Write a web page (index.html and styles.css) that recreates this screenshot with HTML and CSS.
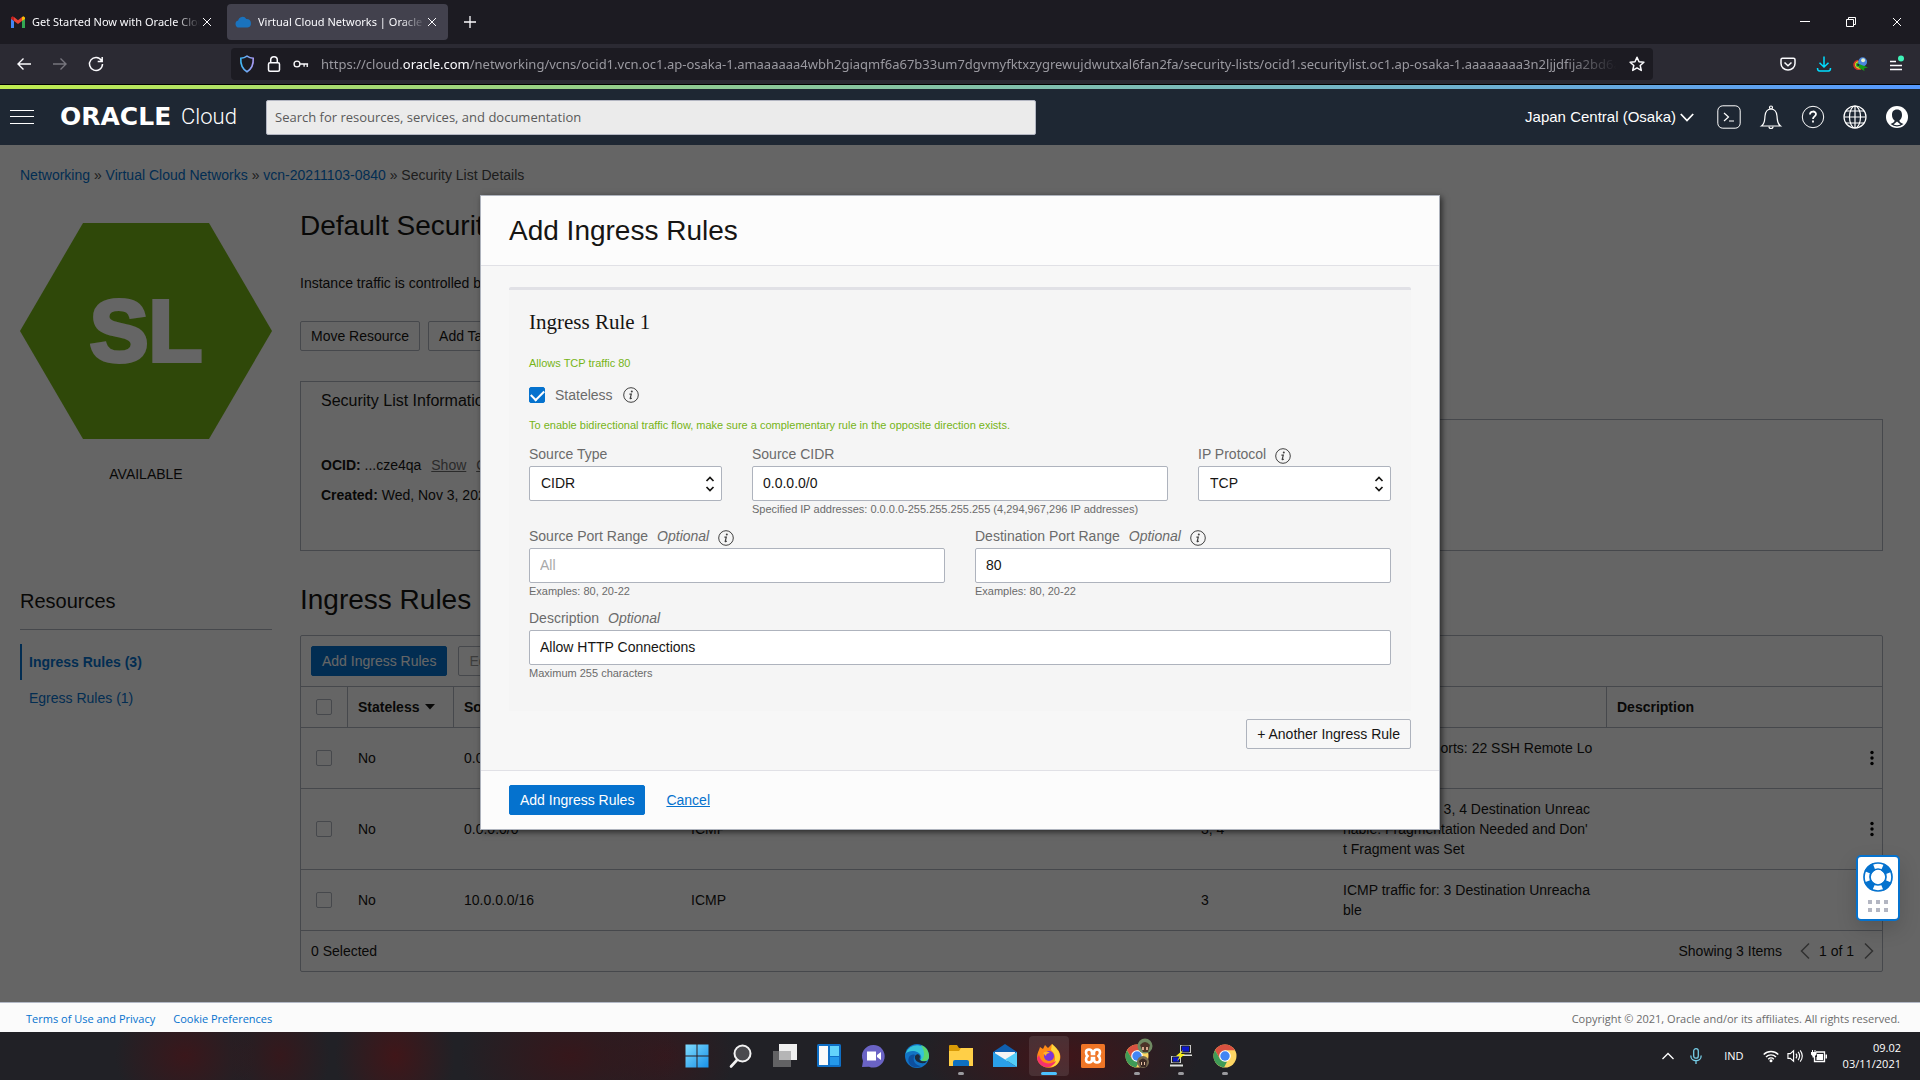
FILE: index.html
```html
<!DOCTYPE html>
<html lang="en">
<head>
<meta charset="utf-8">
<title>Virtual Cloud Networks | Oracle Cloud Infrastructure</title>
<link rel="stylesheet" href="styles.css">
</head>
<body>
<svg class="sprite" aria-hidden="true">
  <symbol id="info" viewBox="0 0 16 16"><circle cx="8" cy="8" r="7.3" fill="none" stroke="#404040"/><circle cx="8.8" cy="4.6" r="1" fill="#404040"/><path d="M6.4 7.2h1.9L7.2 11.3q-.2.8 1.6-.3" fill="none" stroke="#404040" stroke-width="1.2"/></symbol>
  <symbol id="close" viewBox="0 0 10 10"><path d="M1 1l8 8M9 1l-8 8" stroke="currentColor" fill="none"/></symbol>
  <symbol id="kebab" viewBox="0 0 4 16"><circle cx="2" cy="2.500" r="1.700"/><circle cx="2" cy="8" r="1.700"/><circle cx="2" cy="13.500" r="1.700"/></symbol>
  <symbol id="updown" viewBox="0 0 10 16"><path d="M1.500 5L5 1.500 8.500 5M1.500 11L5 14.500 8.500 11" fill="none" stroke="#161513" stroke-width="1.700"/></symbol>
  <symbol id="chrome" viewBox="0 0 24 24"><circle cx="12" cy="12" r="11.500" fill="#fdd663"/><path d="M12 .5a11.500 11.500 0 0 1 10 5.800H12L7 15 2 6.300A11.500 11.500 0 0 1 12 .5z" fill="#d95140"/><path d="M2 6.300L7 15l5 2.600 2 .2-3 5.700A11.500 11.500 0 0 1 2 6.300z" fill="#3f9b57"/><circle cx="12" cy="12" r="5.800" fill="#fff"/><circle cx="12" cy="12" r="4.700" fill="#4285f4"/></symbol>
</svg>

<header class="browser">
  <div class="tabbar">
    <div class="tab">
      <svg width="14" height="12" viewBox="0 0 14 12"><path d="M0 2v10h3V5z" fill="#4285f4"/><path d="M14 2v10h-3V5z" fill="#34a853"/><path d="M0 1.500L1.500.3 3 1v4L0 3z" fill="#c5221f"/><path d="M3 1l4 3.200L11 1v4L7 8 3 5z" fill="#ea4335"/><path d="M11 1l1.500-.7L14 1.500V3l-3 2z" fill="#fbbc04"/></svg>
      <span class="tab-title">Get Started Now with Oracle Cloud</span>
      <button class="tab-close" aria-label="Close tab"><svg width="10" height="10"><use href="#close"/></svg></button>
    </div>
    <div class="tab tab-active">
      <svg width="16" height="12" viewBox="0 0 16 12"><path d="M4 11.500a3.500 3.500 0 0 1-.8-6.900A4.400 4.400 0 0 1 11.300 3a4.300 4.300 0 0 1 1.200 8.500z" fill="#1a73be"/></svg>
      <span class="tab-title">Virtual Cloud Networks | Oracle Cloud</span>
      <button class="tab-close" aria-label="Close tab"><svg width="10" height="10"><use href="#close"/></svg></button>
    </div>
    <button class="tab-new" aria-label="New tab"><svg width="12" height="12" viewBox="0 0 12 12"><path d="M6 0v12M0 6h12" stroke="#fbfbfe" stroke-width="1.300"/></svg></button>
    <div class="window-controls">
      <button aria-label="Minimize"><svg width="10" height="10" viewBox="0 0 10 10"><path d="M0 4.500h10" stroke="#fff"/></svg></button>
      <button aria-label="Restore"><svg width="10" height="10" viewBox="0 0 10 10" fill="none" stroke="#fff"><path d="M.5 2.500h7v7h-7zM2.500 2.500v-2h7v7h-2"/></svg></button>
      <button aria-label="Close window"><svg width="10" height="10" color="#fff"><use href="#close"/></svg></button>
    </div>
  </div>
  <div class="navbar">
    <div class="nav-buttons">
      <button aria-label="Back"><svg width="16" height="16" viewBox="0 0 16 16" fill="none" stroke="#fbfbfe" stroke-width="1.400"><path d="M15 8H2M7.500 2.500L2 8l5.500 5.500"/></svg></button>
      <button aria-label="Forward"><svg width="16" height="16" viewBox="0 0 16 16" fill="none" stroke="#77767e" stroke-width="1.400"><path d="M1 8h13M8.500 2.500L14 8l-5.500 5.500"/></svg></button>
      <button aria-label="Reload"><svg width="16" height="16" viewBox="0 0 16 16" fill="none" stroke="#fbfbfe" stroke-width="1.500"><path d="M13.500 4.500A6.500 6.500 0 1 0 14.500 8M14.200 1v4.500H9.700"/></svg></button>
    </div>
    <div class="urlbar">
      <svg width="16" height="18" viewBox="0 0 16 18"><defs><linearGradient id="sg" x1="0" x2="1"><stop offset="0" stop-color="#3fb8f5"/><stop offset="1" stop-color="#a99cf5"/></linearGradient></defs><path d="M8 1.200c2 1.500 4.300 2 6.200 2 .4 6-1.200 10.500-6.200 13.500C3 13.700 1.400 9.200 1.800 3.200c1.900 0 4.200-.5 6.200-2z" fill="none" stroke="url(#sg)" stroke-width="1.600"/></svg>
      <svg width="14" height="18" viewBox="0 0 14 18" fill="none" stroke="#fbfbfe" stroke-width="1.500"><rect x="1.500" y="7.800" width="11" height="8.500" rx="1.500"/><path d="M3.700 7.800V5a3.300 3.300 0 0 1 6.600 0v2.800"/></svg>
      <svg width="16" height="10" viewBox="0 0 18 10" fill="none" stroke="#fbfbfe" stroke-width="1.500"><circle cx="4.500" cy="5" r="3.300"/><path d="M8 5h9M16 5v3.500M12.500 5v3"/></svg>
      <span class="url">https://cloud.<b>oracle.com</b>/networking/vcns/ocid1.vcn.oc1.ap-osaka-1.amaaaaaa4wbh2giaqmf6a67b33um7dgvmyfktxzygrewujdwutxal6fan2fa/security-lists/ocid1.securitylist.oc1.ap-osaka-1.aaaaaaaa3n2ljjdfija2bd6ayz</span>
      <button aria-label="Bookmark"><svg width="16" height="16" viewBox="0 0 16 16"><path d="M8 1.200l2 4.500 4.900.5-3.700 3.300 1.100 4.900L8 11.900l-4.300 2.500 1.100-4.900L1.100 6.200 6 5.700z" fill="none" stroke="#fbfbfe" stroke-width="1.500" stroke-linejoin="round"/></svg></button>
    </div>
    <div class="nav-tools">
      <button aria-label="Pocket"><svg width="16" height="16" viewBox="0 0 16 16" fill="none" stroke="#fbfbfe" stroke-width="1.500"><path d="M2.500 2.200h11q1.500 0 1.500 1.500v3.800a7 6.500 0 0 1-14 0V3.700q0-1.500 1.500-1.500z"/><path d="M4.500 6.500L8 9.700l3.500-3.200"/></svg></button>
      <button aria-label="Downloads"><svg width="16" height="16" viewBox="0 0 16 16" fill="none" stroke="#00ddff" stroke-width="1.500"><path d="M8 .5v10.500M3.500 6.700L8 11l4.500-4.300M1.500 12q0 3 2 3h9q2 0 2-3"/></svg></button>
      <button aria-label="Download manager"><svg width="16" height="16" viewBox="0 0 18 16"><path d="M10 13.500A5.500 5 0 1 1 7 4" fill="none" stroke="#d6342b" stroke-width="1.800"/><path d="M10 12A4 3.500 0 1 1 7.500 5.500" fill="none" stroke="#f1d21a" stroke-width="1.600"/><path d="M9 10.500A2.500 2 0 1 1 8 7" fill="none" stroke="#2fae3a" stroke-width="1.500"/><circle cx="12" cy="5.500" r="5" fill="#4a86dd"/><circle cx="12.500" cy="3.800" r="2.200" fill="#e8f2d0"/><path d="M8 8l10 4-4.500 1 .5 3-6-3.500z" fill="#159a18"/></svg></button>
      <button aria-label="Menu"><svg width="16" height="18" viewBox="1 0 16 18"><path d="M3 6.500h6M3 10.500h12M3 14.500h12" stroke="#fbfbfe" stroke-width="1.500"/><circle cx="14" cy="3.500" r="3" fill="#3ff2b8"/></svg></button>
    </div>
  </div>
</header>

<header class="cloudbar">
  <button class="burger" aria-label="Navigation menu"><svg width="24" height="14" viewBox="0 0 24 14"><path d="M0 .5h24M0 6.500h24M0 13.500h24" stroke="#fff"/></svg></button>
  <a class="logo" href="#"><span class="logo-oracle">ORACLE</span><span class="logo-cloud">Cloud</span></a>
  <input class="search" type="text" aria-label="Search" placeholder="Search for resources, services, and documentation">
  <div class="cloud-tools">
    <button class="region">Japan Central (Osaka)<svg width="14" height="9" viewBox="0 0 14 9"><path d="M.8 1L7 7.500 13.200 1" fill="none" stroke="#fff" stroke-width="1.800"/></svg></button>
    <button aria-label="Cloud Shell"><svg width="24" height="24" viewBox="0 0 24 24" fill="none" stroke="#fff"><rect x=".8" y=".8" width="22.400" height="22.400" rx="5"/><path d="M7 8l4.500 4L7 16M12 16h5" stroke-width="1.200"/></svg></button>
    <button aria-label="Announcements"><svg width="24" height="24" viewBox="0 0 24 24" fill="none" stroke="#fff" stroke-width="1.200"><path d="M2.500 21c3.500-2.500 3-5 3.500-10 .4-4 2-7 6-7s5.600 3 6 7c.5 5 0 7.500 3.500 10z"/><circle cx="12" cy="2.500" r="1.500"/><path d="M10 21.500a2 2 0 0 0 4 0"/></svg></button>
    <button aria-label="Help"><svg width="24" height="24" viewBox="0 0 24 24" fill="none" stroke="#fff"><circle cx="12" cy="12" r="10.700"/><path d="M9 9.500c0-4 6-3.800 6-.4 0 2.400-3 2.200-3 5" stroke-width="1.800"/><path d="M12 15.500v2" stroke-width="1.800"/></svg></button>
    <button aria-label="Language"><svg width="24" height="24" viewBox="0 0 24 24" fill="none" stroke="#fff" stroke-width="1.200"><circle cx="12" cy="12" r="11"/><ellipse cx="12" cy="12" rx="5.500" ry="11"/><path d="M12 1v22M1 12h22M3 6h18M3 18h18"/></svg></button>
    <button aria-label="Profile"><svg width="24" height="24" viewBox="0 0 24 24"><circle cx="12" cy="12" r="11" fill="#fff"/><path d="M12 4.500c-3.500 0-5 2.300-5 5.500 0 2.500 1 4.500 2.600 5.600-.2 1.800-1.600 2.500-4.100 3.400a10 10 0 0 0 13 0c-2.500-.9-3.900-1.600-4.100-3.400C16 14.500 17 12.500 17 10c0-3.200-1.500-5.500-5-5.500z" fill="#1e2733"/><path d="M8.500 19.500l3.500-3 3.500 3a9 9 0 0 1-7 0z" fill="#fff"/></svg></button>
  </div>
</header>

<div class="stage">
<main class="page">
  <nav class="crumbs"><a href="#">Networking</a> » <a href="#">Virtual Cloud Networks</a> » <a href="#">vcn-20211103-0840</a> » Security List Details</nav>

  <div class="columns details">
    <aside class="badge-col">
      <div class="hexagon">SL</div>
      <p class="state">AVAILABLE</p>
    </aside>
    <section>
      <h1>Default Security List for vcn-20211103-0840</h1>
      <p class="lead">Instance traffic is controlled by firewall rules on each Instance in addition to this Security List</p>
      <div class="actions"><button class="btn">Move Resource</button><button class="btn">Add Tags</button></div>
      <div class="tabs"><button class="info-tab">Security List Information</button></div>
      <div class="panel">
        <p><b>OCID:</b> ...cze4qa <a href="#">Show</a> <a href="#">Copy</a></p>
        <p><b>Created:</b> Wed, Nov 3, 2021, 01:40:38 UTC</p>
      </div>
    </section>
  </div>

  <div class="columns rules">
    <aside class="resources">
      <h2>Resources</h2>
      <a class="current" href="#">Ingress Rules (3)</a>
      <a href="#">Egress Rules (1)</a>
    </aside>
    <section>
      <h1>Ingress Rules</h1>
      <div class="grid-box">
        <div class="toolbar"><button class="btn primary">Add Ingress Rules</button><button class="btn" disabled>Edit</button><button class="btn" disabled>Remove</button></div>
        <table>
          <colgroup><col class="c-check"><col class="c-state"><col class="c-source"><col class="c-port"><col class="c-port"><col class="c-port"><col class="c-type"><col class="c-allows"><col><col class="c-menu"></colgroup>
          <thead><tr>
            <th><input type="checkbox" aria-label="Select all"></th>
            <th>Stateless <svg width="10" height="6" viewBox="0 0 10 6"><path d="M0 0h10L5 5.500z" fill="#161513"/></svg></th>
            <th>Source</th><th>IP Protocol</th><th>Source Port Range</th><th>Destination Port</th><th>Type and Code</th><th>Allows</th><th>Description</th><th></th>
          </tr></thead>
          <tbody>
            <tr><td><input type="checkbox" aria-label="Select rule 1"></td><td>No</td><td>0.0.0.0/0</td><td>TCP</td><td>All</td><td>22</td><td></td><td>TCP traffic for ports: 22 SSH Remote Login Protocol</td><td></td><td><button class="menu" aria-label="Actions"><svg width="4" height="16"><use href="#kebab"/></svg></button></td></tr>
            <tr><td><input type="checkbox" aria-label="Select rule 2"></td><td>No</td><td>0.0.0.0/0</td><td>ICMP</td><td></td><td></td><td>3, 4</td><td>ICMP traffic for: 3, 4 Destination Unreachable: Fragmentation Needed and Don'<br>t Fragment was Set</td><td></td><td><button class="menu" aria-label="Actions"><svg width="4" height="16"><use href="#kebab"/></svg></button></td></tr>
            <tr><td><input type="checkbox" aria-label="Select rule 3"></td><td>No</td><td>10.0.0.0/16</td><td>ICMP</td><td></td><td></td><td>3</td><td>ICMP traffic for: 3 Destination Unreachable</td><td></td><td><button class="menu" aria-label="Actions"><svg width="4" height="16"><use href="#kebab"/></svg></button></td></tr>
          </tbody>
        </table>
        <div class="grid-foot">
          <span>0 Selected</span>
          <div class="pager"><span>Showing 3 Items</span>
            <button aria-label="Previous page"><svg width="10" height="16" viewBox="0 0 10 16"><path d="M9 .5L1.500 8 9 15.500" fill="none" stroke="#7a7a7a" stroke-width="1.500"/></svg></button>
            <span>1 of 1</span>
            <button aria-label="Next page"><svg width="10" height="16" viewBox="0 0 10 16"><path d="M1 .5L8.500 8 1 15.500" fill="none" stroke="#7a7a7a" stroke-width="1.500"/></svg></button>
          </div>
        </div>
      </div>
    </section>
  </div>
</main>

<div class="overlay">
  <form class="dialog" role="dialog" aria-labelledby="dlg-title">
    <header class="dialog-head"><h1 id="dlg-title">Add Ingress Rules</h1></header>
    <div class="dialog-body">
      <fieldset class="rule">
        <h2>Ingress Rule 1</h2>
        <p class="note">Allows TCP traffic 80</p>
        <div class="check-row"><input type="checkbox" id="stateless" checked><label for="stateless">Stateless</label><svg class="info" width="16" height="16"><use href="#info"/></svg></div>
        <p class="note">To enable bidirectional traffic flow, make sure a complementary rule in the opposite direction exists.</p>
        <div class="fields">
          <div class="field">
            <div class="label-row"><label for="stype">Source Type</label></div>
            <div class="select"><select id="stype"><option>CIDR</option></select><svg width="10" height="16"><use href="#updown"/></svg></div>
          </div>
          <div class="field wide">
            <div class="label-row"><label for="cidr">Source CIDR</label></div>
            <input type="text" id="cidr" value="0.0.0.0/0">
            <small>Specified IP addresses: 0.0.0.0-255.255.255.255 (4,294,967,296 IP addresses)</small>
          </div>
          <div class="field">
            <div class="label-row"><label for="proto">IP Protocol</label><svg class="info" width="16" height="16"><use href="#info"/></svg></div>
            <div class="select"><select id="proto"><option>TCP</option></select><svg width="10" height="16"><use href="#updown"/></svg></div>
          </div>
          <div class="field wide">
            <div class="label-row"><label for="sport">Source Port Range</label><i>Optional</i><svg class="info" width="16" height="16"><use href="#info"/></svg></div>
            <input type="text" id="sport" placeholder="All">
            <small>Examples: 80, 20-22</small>
          </div>
          <div class="field wide">
            <div class="label-row"><label for="dport">Destination Port Range</label><i>Optional</i><svg class="info" width="16" height="16"><use href="#info"/></svg></div>
            <input type="text" id="dport" value="80">
            <small>Examples: 80, 20-22</small>
          </div>
          <div class="field full">
            <div class="label-row"><label for="descr">Description</label><i>Optional</i></div>
            <input type="text" id="descr" value="Allow HTTP Connections">
            <small>Maximum 255 characters</small>
          </div>
        </div>
      </fieldset>
      <div class="another"><button type="button" class="btn">+ Another Ingress Rule</button></div>
    </div>
    <footer class="dialog-foot"><button type="button" class="btn primary">Add Ingress Rules</button><a href="#">Cancel</a></footer>
  </form>
</div>

<button class="support" aria-label="Support">
  <svg width="30" height="30" viewBox="0 0 30 30" fill="none" stroke="#0572ce"><circle cx="15" cy="15" r="11" stroke-width="7.500" stroke-dasharray="8.600 8.680" stroke-dashoffset="-4.300"/><circle cx="15" cy="15" r="14" stroke-width="1.700"/><circle cx="15" cy="15" r="8" stroke-width="1.700"/></svg>
  <svg width="20" height="12" viewBox="0 0 20 12" fill="#b3b6c2"><path d="M0 0h4v4H0zM8 0h4v4H8zM16 0h4v4h-4zM0 8h4v4H0zM8 8h4v4H8zM16 8h4v4h-4z"/></svg>
</button>
</div>

<footer class="site-foot">
  <nav><a href="#">Terms of Use and Privacy</a><a href="#">Cookie Preferences</a></nav>
  <span>Copyright © 2021, Oracle and/or its affiliates. All rights reserved.</span>
</footer>

<footer class="taskbar">
  <div class="apps">
    <button aria-label="Start"><svg width="24" height="24" viewBox="0 0 24 24"><defs><linearGradient id="win" x1="0" y1="0" x2="1" y2="1"><stop offset="0" stop-color="#7fdcff"/><stop offset="1" stop-color="#1890e8"/></linearGradient></defs><path d="M.5.500h11v11H.5zM12.500.500h11v11h-11zM.5 12.500h11v11H.5zM12.500 12.500h11v11h-11z" fill="url(#win)"/></svg></button>
    <button aria-label="Search"><svg width="24" height="24" viewBox="0 0 24 24" fill="#4a4a4e" stroke="#f2f2f2"><circle cx="13.500" cy="9.500" r="8" stroke-width="2"/><path d="M8 16l-6 6.500" stroke-width="2.600" stroke-linecap="round"/></svg></button>
    <button aria-label="Task view"><svg width="24" height="24" viewBox="0 0 24 24"><path d="M0 7h18v16H0z" fill="#626264"/><path d="M6 0h18v16H6z" fill="#efefef"/><path d="M6 7h12v9H6z" fill="#b5b5b6"/></svg></button>
    <button aria-label="Widgets"><svg width="24" height="24" viewBox="0 0 24 24"><rect width="24" height="23" rx="1.500" fill="#0f6fc5"/><path d="M2 2h9v19H2z" fill="#fafafa"/><path d="M13 2h9v10h-9z" fill="#63d3fb"/><path d="M13 13h9v8h-9z" fill="#2599ea"/></svg></button>
    <button aria-label="Chat"><svg width="24" height="24" viewBox="0 0 24 24"><path d="M12.500 1a11.300 11.300 0 1 1-4.500 21.700L1 23l1-6A11.300 11.300 0 0 1 12.500 1z" fill="#6a63c4"/><path d="M6 7.500h9v9H6zM16 11l4-3v8l-4-3z" fill="#fff"/></svg></button>
    <button aria-label="Edge"><svg width="24" height="24" viewBox="0 0 24 24"><circle cx="12" cy="12" r="12" fill="#1273c4"/><path d="M.5 10A12 12 0 0 1 24 12c0 5-5 6-8 5-2-1 1-2 0-5-2-5-11-7-15.500-2z" fill="#35c3d8"/><path d="M16 1a12 12 0 0 1 8 11c0 5-5 6-8 5 3-3 5-8 0-16z" fill="#5cd66c"/><path d="M10 11c-3 4-1 10 6 11-7 4-15-2-12-9 1-2 4-3 6-2z" fill="#0d4f9e"/><path d="M10 12c-1 4 3 8 10 7l2-2c-4 1-9 0-7-4 0-3-3-4-5-1z" fill="#1c2a3c"/></svg></button>
    <button class="open" aria-label="Explorer"><svg width="24" height="24" viewBox="0 0 24 24"><path d="M0 2q0-1 1-1h7l2 3h13v5H0z" fill="#d99a06"/><path d="M0 7h10l2-3h12v18H0z" fill="#ffcf47"/><path d="M4 22v-4q0-2 2-2h12q2 0 2 2v4z" fill="#0e6fc0"/></svg></button>
    <button aria-label="Mail"><svg width="24" height="24" viewBox="0 0 24 24"><path d="M0 8L12 0l12 8v4H0z" fill="#0f5fb0"/><path d="M2 8h20v6l-10 4-10-5z" fill="#f4f4f4"/><path d="M0 8l24 15H0z" fill="#2a9fe8"/><path d="M24 8L12 15.500 24 23z" fill="#53cdf8"/></svg></button>
    <button class="open active" aria-label="Firefox"><svg width="24" height="24" viewBox="0 0 24 24"><path d="M2 6l1-3 3 2 2-4 3 3 4-4 3 5 3 1c3 4 3 9 1 12-4 7-15 8-20 1-3-4-2-9 0-13z" fill="#ff8a16"/><path d="M15 0c5 4 8 8 8 13 0 6-5 10-9 10 5-5 6-12 0-17z" fill="#ffd43a"/><path d="M2 11c2 8 9 11 17 6-4 9-17 8-19-3z" fill="#f5326e"/><circle cx="12" cy="12" r="5" fill="#7a35d8"/><path d="M6 9q4-3 7 0-4 0-4 3z" fill="#ffb52a"/></svg></button>
    <button aria-label="XAMPP"><svg width="24" height="24" viewBox="0 0 24 24"><rect width="24" height="24" rx="1.500" fill="#ef7526"/><path d="M8 5.500q3 0 3 3v1.500h2V8.500q0-3 3-3t3 3q0 2-1.500 3.500Q19 13.500 19 15.500q0 3-3 3t-3-3V14h-2v1.500q0 3-3 3t-3-3Q5 13.500 6.500 12 5 10.500 5 8.500q0-3 3-3z" fill="none" stroke="#fff" stroke-width="2.600"/></svg></button>
    <button class="open" aria-label="Chrome profile"><svg width="24" height="24" viewBox="0 0 24 24"><use href="#chrome"/><circle cx="20" cy="2" r="7.500" fill="#6f8a62"/><path d="M15 1q5-6 10 0l-2 7h-5z" fill="#4d3428"/><path d="M17 3h2v3h-2zM21 3h2v3h-2z" fill="#d8a98c"/><circle cx="18" cy="18" r="6" fill="#776a50"/><path d="M14 17q4-5 8 0l-1 6h-5z" fill="#3e2c26"/><path d="M16 18h1v3h-1zM19 18h1v3h-1z" fill="#e8c0a0"/></svg></button>
    <button class="open" aria-label="PuTTY"><svg width="24" height="24" viewBox="0 0 24 24" stroke="#222"><path d="M10.500.500h12v9h-12z" fill="#c9c9c9"/><path d="M12.500 2h8v6h-8z" fill="#0b16c8"/><path d="M9.500 10h14v2.500h-14z" fill="#ddd"/><path d="M1.500 11.500h11v8h-11z" fill="#c9c9c9"/><path d="M3.500 13h7v5h-7z" fill="#0b16c8"/><path d="M.5 20h14v3H.5z" fill="#ddd"/><path d="M14 6l-7 6h4l-3 5 8-7h-4z" fill="#f6ee19" stroke="none"/></svg></button>
    <button class="open" aria-label="Chrome"><svg width="24" height="24"><use href="#chrome"/></svg></button>
  </div>
  <div class="tray">
    <svg width="12" height="8" viewBox="0 0 12 8"><path d="M.5 7L6 1.500 11.500 7" fill="none" stroke="#fff" stroke-width="1.300"/></svg>
    <svg width="12" height="16" viewBox="0 0 12 16" fill="none" stroke="#76cde6" stroke-width="1.300"><rect x="3.700" y=".7" width="4.600" height="9.500" rx="2.300"/><path d="M.8 7.500c0 7 10.400 7 10.400 0M6 12.700V16"/></svg>
    <span class="lang">IND</span>
    <div class="status">
      <svg width="16" height="12" viewBox="0 0 16 12" fill="none" stroke="#fff" stroke-width="1.400"><path d="M.7 4.500a10.300 10.300 0 0 1 14.600 0M3 7a7 7 0 0 1 10 0M5.200 9.200a4 4 0 0 1 5.600 0"/><circle cx="8" cy="10.700" r=".8" fill="#fff"/></svg>
      <svg width="16" height="14" viewBox="0 0 17 14" fill="none" stroke="#fff" stroke-width="1.200"><path d="M1 4.500h2.500L7 1.500v11L3.500 9.500H1zM9.500 4.500q2 2.500 0 5M11.800 2.700q3.200 4.300 0 8.600M14 1q4.500 6 0 12"/></svg>
      <svg width="16" height="12" viewBox="0 0 16 12"><path d="M5 2h8.500v9.500h-10V7" fill="none" stroke="#fff" stroke-width="1.300"/><path d="M6 4h6v6H5.500V7H6zM14.500 4.500H16v4h-1.500zM0 2h5.500v2.500L4 6v1.500H1.500V6L0 4.500zM1 0h1v2H1zM3.500 0h1v2h-1z" fill="#fff"/></svg>
    </div>
    <div class="clock"><span>09.02</span><span>03/11/2021</span></div>
  </div>
</footer>
</body>
</html>
```
FILE: styles.css
```css
* { box-sizing: border-box; }
body {
  margin: 0;
  min-height: 100vh;
  display: flex;
  flex-direction: column;
  font: 14px/20px "Liberation Sans", Arial, sans-serif;
  color: #161513;
  background: #fcfcfc;
}
h1, h2, p { margin: 0; font-weight: normal; }
h1 { font-size: 28px; line-height: 36px; }
button { margin: 0; padding: 0; border: 0; background: none; font: inherit; color: inherit; }
svg { display: block; flex: none; overflow: visible; }
a { color: #0572ce; text-decoration: none; }
.sprite { position: absolute; width: 0; height: 0; }

/* browser frame */
.browser { font-family: "Noto Sans", "Open Sans", sans-serif; color: #fbfbfe; background: #1c1b22; }
.tabbar { display: flex; height: 44px; padding-top: 4px; }
.tab { display: flex; align-items: center; gap: 7px; width: 227px; height: 36px; padding: 0 15px 0 11px; font-size: 11px; }
.tab-active { width: 221px; padding: 0 11px 0 8px; border-radius: 4px; background: #42414d; }
.tab-title { flex: 1; overflow: hidden; white-space: nowrap; mask-image: linear-gradient(90deg, #000 85%, transparent); }
.tab-close { margin-left: -5px; }
.tab-new { width: 44px; height: 36px; display: grid; place-items: center; }
.window-controls { display: flex; margin-left: auto; height: 36px; }
.window-controls button { width: 46px; display: grid; place-items: center; }
.navbar { display: flex; align-items: center; height: 41px; background: #2b2a33; border-bottom: 1px solid #000; }
.nav-buttons { display: flex; gap: 20px; width: 231px; padding-left: 16px; }
.urlbar { flex: 1; min-width: 0; display: flex; align-items: center; gap: 12px; height: 32px; padding: 0 8px; border-radius: 4px; background: #1c1b22; }
.url { flex: 1; overflow: hidden; white-space: nowrap; font-size: 13px; color: #9a99a0; mask-image: linear-gradient(90deg, #000 96%, transparent); }
.url b { font-weight: normal; color: #fbfbfe; }
.nav-tools { display: flex; align-items: center; gap: 20px; width: 267px; padding-right: 16px; justify-content: flex-end; }

/* console header */
.cloudbar {
  display: flex;
  align-items: center;
  height: 60px;
  padding: 0 11px 0 10px;
  border-top: 4px solid;
  border-image: linear-gradient(90deg, #c0ec4f, #8fcb93 36%, #6fb2cd 75%, #5598ff) 1;
  background: #1e2733;
  color: #fff;
}
.logo { display: flex; align-items: center; gap: 7px; width: 206px; margin-left: 26px; color: #fff; }
.logo-oracle { width: 114px; font: bold 25px/24px "DejaVu Sans", sans-serif; }
.logo-cloud { font: 300 22px/24px Roboto, sans-serif; }
.search { flex: 0 1 770px; height: 35px; padding: 0 8px; border: 1px solid #b3b6c2; border-radius: 2px; background: #ebebeb; font: 13px "Open Sans", "Noto Sans", sans-serif; }
.search::placeholder { color: #5a5a5a; opacity: 1; }
.cloud-tools { display: flex; align-items: center; gap: 18px; margin-left: auto; }
.region { display: flex; align-items: center; gap: 4px; margin-right: 5px; font-size: 15px; white-space: nowrap; }

/* page */
.stage { position: relative; flex: 1; }
.page { padding: 20px 37px 30px 20px; }
.crumbs { color: #4a4a4a; }
.columns { display: grid; grid-template-columns: 252px minmax(0, 1fr); gap: 28px; }
.details { margin-top: 22px; }
.details h1, .dialog-head h1 { padding-top: 2px; line-height: 34px; }
.badge-col { padding-top: 16px; text-align: center; }
.hexagon {
  height: 216px;
  clip-path: polygon(25% 0, 75% 0, 100% 50%, 75% 100%, 25% 100%, 0 50%);
  background: #76b417;
  color: #fcfcfc;
  font: bold 88px/216px "Liberation Sans", Arial, sans-serif;
  -webkit-text-stroke: 4px #fcfcfc;
}
.state { margin-top: 25px; }
.lead { margin-top: 30px; }
.actions { display: flex; gap: 8px; margin-top: 28px; }
.btn { height: 30px; padding: 0 10px; border: 1px solid #aeb3bd; border-radius: 2px; white-space: nowrap; }
.btn:disabled { color: #999; }
.btn.primary { border-color: #0572ce; background: #0572ce; color: #fff; }
.tabs { display: flex; margin-top: 30px; }
.info-tab { height: 38px; padding: 0 20px; border: 1px solid #aeb3bd; border-bottom: 0; font-size: 16px; }
.panel { position: relative; height: 132px; padding: 35px 20px; border: 1px solid #aeb3bd; }
.tabs + .panel { border-image: linear-gradient(90deg, #aeb3bd, #aeb3bd) 1; }
.panel::before { content: ""; position: absolute; left: 0; top: -1px; width: 215px; height: 1px; background: #fcfcfc; }
.panel p + p { margin-top: 10px; }
.panel a { margin-left: 6px; color: #6b6b6b; text-decoration: underline; }

.rules { margin-top: 31px; }
.resources { display: flex; flex-direction: column; padding-top: 7px; }
.resources h2 { margin-bottom: 14px; padding-bottom: 16px; border-bottom: 1px solid #aeb3bd; font-size: 20px; line-height: 24px; }
.resources a { padding-left: 9px; line-height: 36px; }
.resources .current { padding-left: 7px; border-left: 2px solid #0572ce; font-weight: bold; }
.grid-box { margin-top: 17px; border: 1px solid #aeb3bd; border-radius: 2px; }
.toolbar { display: flex; gap: 11px; padding: 10px; }
table { width: 100%; table-layout: fixed; border-collapse: separate; border-spacing: 0; border-top: 1px solid #aeb3bd; }
th, td { padding: 10px; border-bottom: 1px solid #aeb3bd; text-align: left; }
th { white-space: nowrap; overflow: hidden; border-right: 1px solid #aeb3bd; }
th svg { display: inline-block; margin-left: 2px; vertical-align: 2px; }
th:nth-last-child(-n+2) { border-right: 0; }
td { word-break: break-all; }
tr > :first-child { padding: 0 0 0 15px; }
.c-check { width: 47px; }
.c-state { width: 106px; }
.c-source { width: 227px; }
.c-port { width: 170px; }
.c-type { width: 142px; }
.c-allows { width: 274px; }
.c-menu { width: 22px; }
tr > :last-child { padding: 0 10px; }
input[type="checkbox"] { display: block; appearance: none; width: 16px; height: 16px; margin: 0; border: 1px solid #aeb3bd; border-radius: 2px; }
.menu { display: block; width: 4px; }
.grid-foot { display: flex; justify-content: space-between; padding: 10px 8px 10px 10px; }
.pager { display: flex; align-items: center; }
.pager button { margin: 0 0 0 10px; }
.pager button:first-of-type { margin: 0 9px 0 18px; }

/* dialog */
.overlay { position: absolute; inset: 0; padding-top: 50px; background: rgba(0, 0, 0, 0.6); }
.dialog { width: 50%; min-width: 760px; margin: 0 auto; border: 1px solid #aeb3bd; background: #fcfcfc; box-shadow: 2px 2px 6px rgba(0, 0, 0, 0.6); }
.dialog-head { padding: 16px 28px 17px; border-bottom: 1px solid #e1e1e6; }
.dialog-body { padding: 21px 28px; background: #f7f7f7; }
.rule { min-width: 0; margin: 0; padding: 20px 20px 30px; border: 0; border-top: 3px solid #e1e1e6; border-radius: 2px 2px 0 0; background: #f5f5f5; }
.rule h2 { font: 21px/24px "Liberation Serif", "Times New Roman", serif; }
.note { margin-top: 19px; font-size: 11px; color: #76b417; }
.check-row { display: flex; align-items: center; gap: 10px; margin-top: 12px; color: #6b6b6b; }
.check-row + .note { margin-top: 10px; }
.rule input[type="checkbox"]:checked { display: grid; place-items: center; border-color: #0572ce; background: #0572ce; }
.rule input[type="checkbox"]::after { content: ""; width: 11px; height: 6px; margin-top: -3px; border: solid #fff; border-width: 0 0 2px 2px; transform: rotate(-45deg); }
.fields { display: grid; grid-template-columns: repeat(4, minmax(0, 1fr)); gap: 10px 30px; margin-top: 10px; }
.field { display: flex; flex-direction: column; }
.wide { grid-column: span 2; }
.full { grid-column: 1 / -1; }
.label-row { display: flex; align-items: center; gap: 9px; height: 21px; line-height: 19px; color: #6b6b6b; }
.label-row label, .label-row i { padding-bottom: 2px; }
.field input, .field select { width: 100%; height: 35px; padding: 0 10px 2px; border: 1px solid #aeb3bd; border-radius: 2px; background: #fff; color: #161513; font: inherit; }
.field select { padding: 0 11px 2px; appearance: none; }
.field input::placeholder { color: #a9a9a9; opacity: 1; }
.select { position: relative; }
.select svg { position: absolute; right: 7px; top: 10px; pointer-events: none; }
small { font-size: 11px; line-height: 16px; color: #6b6b6b; }
.another { display: flex; justify-content: flex-end; margin-top: 8px; }
.dialog-foot { display: flex; align-items: center; gap: 21px; padding: 14px 28px; border-top: 1px solid #e1e1e6; }
.dialog-foot a { text-decoration: underline; }

.support {
  position: absolute;
  right: 20px;
  bottom: 81px;
  display: flex;
  flex-direction: column;
  align-items: center;
  gap: 8px;
  width: 44px;
  padding: 5px 0 7px;
  border: 2px solid #0572ce;
  border-radius: 5px;
  background: #fff;
  box-shadow: 0 8px 20px rgba(0, 0, 0, 0.15);
}

.site-foot { display: flex; align-items: center; justify-content: space-between; height: 30px; padding: 3px 20px 0 26px; border-top: 1px solid #b3b9c6; background: #fbfbfb; color: #6b6b6b; font: 11px/16px "Open Sans", "Noto Sans", sans-serif; }
.site-foot nav { display: flex; gap: 18px; }

/* desktop bar */
.taskbar {
  position: relative;
  display: flex;
  align-items: center;
  justify-content: center;
  height: 48px;
  padding-left: 2px;
  color: #fff;
  background:
    radial-gradient(ellipse 70px 60px at 185px 50%, #3a171b, transparent),
    radial-gradient(ellipse 50px 60px at 280px 50%, #35181c, transparent),
    radial-gradient(ellipse 60px 70px at 395px 50%, #401619, transparent),
    radial-gradient(ellipse 110px 70px at 570px 50%, #36171b, transparent),
    radial-gradient(ellipse 70px 60px at 665px 50%, #33191e, transparent),
    radial-gradient(ellipse 140px 60px at 1060px 50%, #401519, transparent),
    #212126;
  font: 11px/16px "Open Sans", "Noto Sans", sans-serif;
}
.apps { display: flex; gap: 4px; }
.apps button { position: relative; display: grid; place-items: center; width: 40px; height: 40px; border-radius: 4px; }
.apps .active { background: rgba(255, 255, 255, 0.1); }
.apps .open::after { content: ""; position: absolute; left: 17px; bottom: 1px; width: 6px; height: 3px; border-radius: 2px; background: #9a9a9e; }
.apps .active::after { left: 12px; width: 16px; background: #4cc2ff; }
.tray { position: absolute; right: 19px; top: 8px; display: flex; align-items: center; gap: 16px; height: 32px; }
.lang { margin: 0 3px 0 6px; }
.status { display: flex; align-items: center; gap: 8px; }
.clock { display: flex; flex-direction: column; align-items: flex-end; }
```
